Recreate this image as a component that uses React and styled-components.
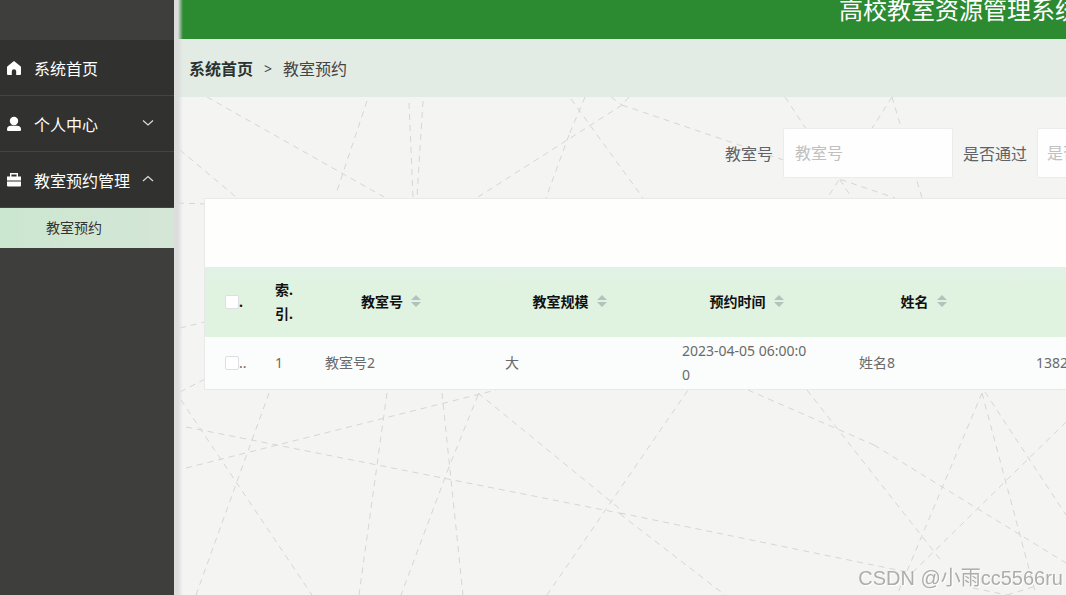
import React, { useState } from "react";
import styled, { createGlobalStyle } from "styled-components";

const columns = ["教室号", "教室规模", "预约时间", "姓名", "手机"];

const rows = [
	{ id: 1, cells: ["教室号2", "大", "2023-04-05 06:00:00", "姓名8", "13823888888"] },
];

// dashed web behind the content, [x1, y1, x2, y2]
const webLines = [
	[33, 0, 210, 100], [6, 53, 62, 100], [193, 4, 162, 97], [249, 4, 243, 100],
	[235, 6, 239, 100], [448, 8, 304, 100], [397, 2, 469, 101], [411, 0, 395, 38],
	[395, 38, 372, 101], [448, 8, 721, 101], [437, 0, 448, 8], [455, 0, 448, 8],
	[611, 0, 678, 101], [718, 0, 654, 100], [718, 0, 748, 101],
	[4, 106, 31, 107], [6, 231, 31, 225], [6, 295, 31, 282],
	[7, 303, 138, 498], [95, 296, 22, 498], [12, 330, 450, 417], [446, 416, 738, 476],
	[12, 371, 322, 293], [213, 296, 185, 498], [268, 296, 289, 498],
	[304, 298, 275, 370], [275, 370, 227, 498], [304, 296, 446, 412], [446, 417, 551, 498],
	[373, 498, 514, 293], [574, 293, 700, 348], [700, 348, 892, 466], [633, 293, 769, 466],
	[808, 296, 723, 498], [808, 296, 862, 498], [811, 295, 892, 418],
	[892, 325, 740, 474], [799, 491, 833, 498], [833, 498, 859, 490],
];

const HomeIcon = () => (
	<svg width="16" height="16" viewBox="0 0 16 16" fill="#fff" aria-hidden="true">
		<path d="M8 1 L14.5 6.2 Q15 6.7 15 7.4 V14 Q15 15 14 15 H10.2 V11.4 Q10.2 9.2 8 9.2 Q5.8 9.2 5.8 11.4 V15 H2 Q1 15 1 14 V7.4 Q1 6.7 1.5 6.2 Z" />
	</svg>
);

const UserIcon = () => (
	<svg width="16" height="16" viewBox="0 0 16 16" fill="#fff" aria-hidden="true">
		<circle cx="8" cy="5" r="4.2" />
		<path d="M1 13.5 Q1 9.8 5 9.8 H11 Q15 9.8 15 13.5 V14 Q15 15 14 15 H2 Q1 15 1 14 Z" />
	</svg>
);

const CaseIcon = () => (
	<svg width="16" height="16" viewBox="0 0 16 16" fill="#fff" aria-hidden="true">
		<path d="M4 4.5 V1 H12 V4.5 H15 V8.6 H1 V4.5 Z M5.4 4.5 H10.6 V2.4 H5.4 Z" fillRule="evenodd" />
		<path d="M1 9.6 H15 V13.5 Q15 14.5 14 14.5 H2 Q1 14.5 1 13.5 Z" />
	</svg>
);

const Arrow = ({ up }) => (
	<svg width="12" height="12" viewBox="0 0 12 12" fill="none" stroke="#ddd" strokeWidth="1.2" aria-hidden="true">
		<path d={up ? "M1 7 L6 2.5 L11 7" : "M1 2.5 L6 7 L11 2.5"} />
	</svg>
);

const Carets = () => (
	<svg width="10" height="12" viewBox="0 0 10 12" fill="#b3c2bd" aria-hidden="true">
		<path d="M0 5 L5 0 L10 5 Z M0 7 H10 L5 12 Z" />
	</svg>
);

const menu = [
	{ label: "系统首页", icon: <HomeIcon /> },
	{ label: "个人中心", icon: <UserIcon />, children: [] },
	{ label: "教室预约管理", icon: <CaseIcon />, children: ["教室预约"] },
];

const App = () => {
	const [open, setOpen] = useState("教室预约管理");
	const [picked, setPicked] = useState(false);

	return <Page>
		<GlobalStyle />
		<Sidebar>
			{menu.map((item) => (
				<React.Fragment key={item.label}>
					<MenuItem type="button" onClick={() => setOpen(item.label)}>
						{item.icon}
						<span>{item.label}</span>
						{item.children && <Arrow up={open === item.label} />}
					</MenuItem>
					{open === item.label && item.children && item.children.map((child) => (
						<SubItem key={child} href="#">{child}</SubItem>
					))}
				</React.Fragment>
			))}
		</Sidebar>
		<Main>
			<Header><h1>高校教室资源管理系统</h1></Header>
			<Breadcrumb>
				<a href="#">系统首页</a>
				<i>&gt;</i>
				<span>教室预约</span>
			</Breadcrumb>
			<Content>
				<Web width="892" height="498" viewBox="0 0 892 498" aria-hidden="true">
					{webLines.map(([x1, y1, x2, y2], i) => (
						<line key={i} x1={x1} y1={y1} x2={x2} y2={y2} />
					))}
				</Web>
				<Search>
					<label htmlFor="room">教室号</label>
					<TextBox id="room" placeholder="教室号" />
					<label htmlFor="passed">是否通过</label>
					<Choice id="passed" defaultValue="">
						<option value="">是否通过</option>
						<option value="1">是</option>
						<option value="0">否</option>
					</Choice>
				</Search>
				<Card>
					<Toolbar />
					<Table>
						<colgroup>
							<col className="check" />
							<col className="index" />
							<col className="room" />
							<col span="4" className="field" />
							<col />
						</colgroup>
						<thead>
							<tr>
								<CheckCell as="th">
									<input type="checkbox" aria-label="全选" checked={picked} onChange={() => setPicked(!picked)} />.
								</CheckCell>
								<IndexCell as="th">索.<br />引.</IndexCell>
								{columns.map((name) => (
									<HeadCell key={name}>
										<SortButton type="button">{name}<Carets /></SortButton>
									</HeadCell>
								))}
								<th></th>
							</tr>
						</thead>
						<tbody>
							{rows.map((row) => (
								<tr key={row.id}>
									<CheckCell>
										<input type="checkbox" aria-label="选择" checked={picked} onChange={() => setPicked(!picked)} />..
									</CheckCell>
									<IndexCell>{row.id}</IndexCell>
									{row.cells.map((cell) => <Cell key={cell}>{cell}</Cell>)}
									<td></td>
								</tr>
							))}
						</tbody>
					</Table>
				</Card>
			</Content>
		</Main>
		<Watermark>CSDN @小雨cc5566ru</Watermark>
	</Page>
}

export default App;


const GlobalStyle = createGlobalStyle`
* {
	box-sizing: border-box;
}
body {
	margin: 0;
	font-family: "Noto Sans", "Noto Sans CJK SC", sans-serif;
}
button, input, select {
	font-family: inherit;
}
`

const Page = styled.div`
display: flex;
min-height: 100vh;
overflow: hidden;
background: #f4f4f3;
`

const Sidebar = styled.nav`
flex: 0 0 174px;
padding-top: 40px;
background: #3e3e3d;
`

const MenuItem = styled.button`
display: flex;
align-items: center;
width: 100%;
height: 56px;
padding: 0 20px 0 6px;
border: 0;
border-bottom: 1px solid #444443;
background: #31312f;
color: #fff;
font-size: 16px;
text-align: left;
cursor: pointer;

span {
	flex: 1;
	margin-left: 12px;
	white-space: nowrap;
}
`

const SubItem = styled.a`
display: block;
padding-left: 46px;
background: linear-gradient(to right, #cbe7d0, #d5e6d7);
color: #333;
font-size: 14px;
line-height: 40px;
text-decoration: none;
`

// wider than small windows, the rest runs out to the right
const Main = styled.main`
position: relative;
flex: 1 0 1570px;

&:before {
	content: "";
	position: absolute;
	z-index: 1;
	top: 0;
	bottom: 0;
	left: 0;
	width: 9px;
	background: linear-gradient(to right, #dcdddc 4px, rgba(228, 232, 228, 0));
}
`

const Header = styled.header`
height: 39px;
background: #2c8a30;
color: #fff;
text-align: center;

h1 {
	margin: 0;
	font-size: 24px;
	font-weight: 400;
	line-height: 20px;
}
`

const Breadcrumb = styled.nav`
display: flex;
align-items: center;
gap: 11px;
height: 58px;
padding: 0 15px;
background: #e3ece4;
color: #444;
font-size: 16px;

a {
	color: #2b3330;
	font-weight: 700;
	text-decoration: none;
}

i {
	font-size: 14px;
	font-style: normal;
}
`

const Content = styled.section`
position: relative;
padding: 31px 30px;
`

const Web = styled.svg`
position: absolute;
top: 0;
left: 0;

line {
	stroke: #d6d6d5;
	stroke-width: 1;
	stroke-dasharray: 6 5;
}
`

const Search = styled.form`
position: relative;
display: flex;
justify-content: center;
align-items: center;
gap: 10px;
margin-bottom: 20px;
color: #606266;
font-size: 16px;
`

const TextBox = styled.input`
width: 170px;
height: 50px;
padding: 0 11px;
border: 1px solid #ececec;
border-radius: 2px;
background: #fefefe;
color: #606266;
font-size: 16px;

&::placeholder {
	color: #c0c0c0;
}
`

const Choice = styled(TextBox).attrs({ as: "select" })`
width: 156px;
appearance: none;
padding: 0 9px;
color: #c0c0c0;
`

const Card = styled.div`
position: relative;
border: 1px solid #e8e9e8;
background: #fefefd;
`

const Toolbar = styled.div`
height: 68px;
`

const Table = styled.table`
width: 100%;
table-layout: fixed;
border-collapse: collapse;
color: #6a6a6c;
font-size: 14px;
line-height: 24px;

.check {
	width: 46px;
}

.index {
	width: 50px;
}

.room {
	width: 180px;
}

.field {
	width: 177px;
}

thead tr {
	height: 70px;
	background: linear-gradient(#e2f1e7, #e0f3e1 14px);
	color: #111;
}

tbody tr {
	height: 52px;
	background: #fafdfb;
}
`

const Cell = styled.td`
padding: 0 24px;
word-break: break-all;
`

const HeadCell = styled.th`
padding: 0 24px;
`

const IndexCell = styled(Cell)`
padding: 0 0 0 24px;
text-align: left;
`

const CheckCell = styled.td`
padding: 0 0 0 20px;
text-align: left;
white-space: nowrap;

input {
	appearance: none;
	width: 14px;
	height: 14px;
	margin: 0;
	border: 1px solid #dcdfe6;
	border-radius: 2px;
	background: #fff;
	vertical-align: -2px;
}

input:checked {
	background: #2c8a30;
}
`

const SortButton = styled.button`
display: inline-flex;
align-items: center;
gap: 8px;
padding: 0;
border: 0;
background: none;
color: inherit;
font-size: 14px;
font-weight: 700;
cursor: pointer;
`

const Watermark = styled.div`
position: fixed;
z-index: 2;
right: 3px;
bottom: 4px;
color: #adadad;
font-family: "Liberation Sans", "Noto Sans CJK SC", sans-serif;
font-size: 20px;
line-height: 26px;
text-shadow: 1px 1px 0 #fff;
`
